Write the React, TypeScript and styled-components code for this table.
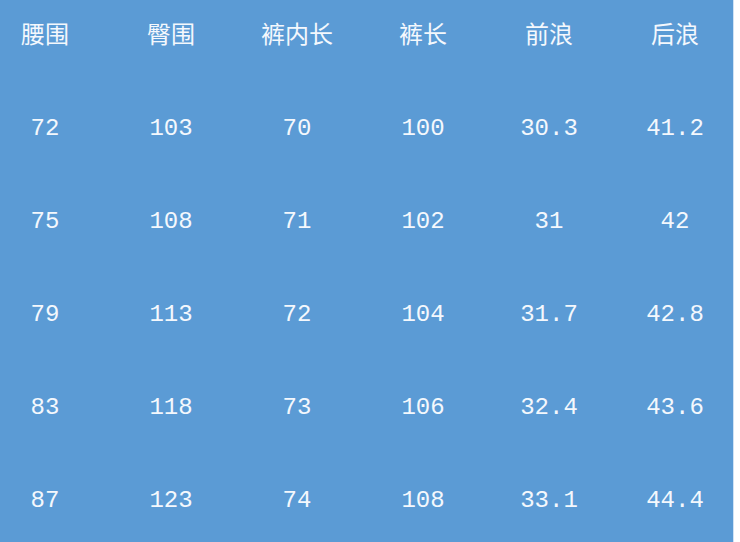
import * as React from 'react'
import styled, { createGlobalStyle } from 'styled-components'

const GlobalStyle = createGlobalStyle`
  html, body {
    margin: 0;
    padding: 0;
    background: #FFF;
  }
`

const Page = styled.div`
  width: 740px;
  height: 542px;
  display: flex;
  background: #FFF;
  overflow: hidden;
`

const Sheet = styled.div`
  width: 733px;
  height: 542px;
  background: #5B9BD5;
  border-right: 1px solid #CFE2F5;
  overflow: hidden;
`

const Table = styled.div`
  display: grid;
  grid-template-columns: repeat(6, 126px);
  grid-auto-rows: 93px;
  margin: -11px 0 0 -18px;
`

const Cell = styled.div<{ $head?: boolean }>`
  display: flex;
  align-items: center;
  justify-content: center;
  padding-bottom: ${p => p.$head ? '6px' : '0'};
  color: #F4F8FD;
  font-family: ${p => p.$head
    ? '"Noto Sans CJK SC", "Noto Sans", sans-serif'
    : '"Liberation Mono", "DejaVu Sans Mono", monospace'};
  font-size: ${p => p.$head ? '24px' : '24px'};
  font-weight: 400;
  white-space: pre;
`

const head = ['腰围', '臀围', '裤内长', '裤长', '前浪', '后浪']

const rows = [
  ['72', '103', '70', '100', '30.3', '41.2'],
  ['75', '108', '71', '102', '31', '42'],
  ['79', '113', '72', '104', '31.7', '42.8'],
  ['83', '118', '73', '106', '32.4', '43.6'],
  ['87', '123', '74', '108', '33.1', '44.4'],
]

export default () => {
  return <Page>
    <GlobalStyle />
    <Sheet>
      <Table>
        {head.map(h => <Cell $head key={h}>{h}</Cell>)}
        {rows.map((r, i) => r.map((v, j) => <Cell key={i + '-' + j}>{v}</Cell>))}
      </Table>
    </Sheet>
  </Page>
}
